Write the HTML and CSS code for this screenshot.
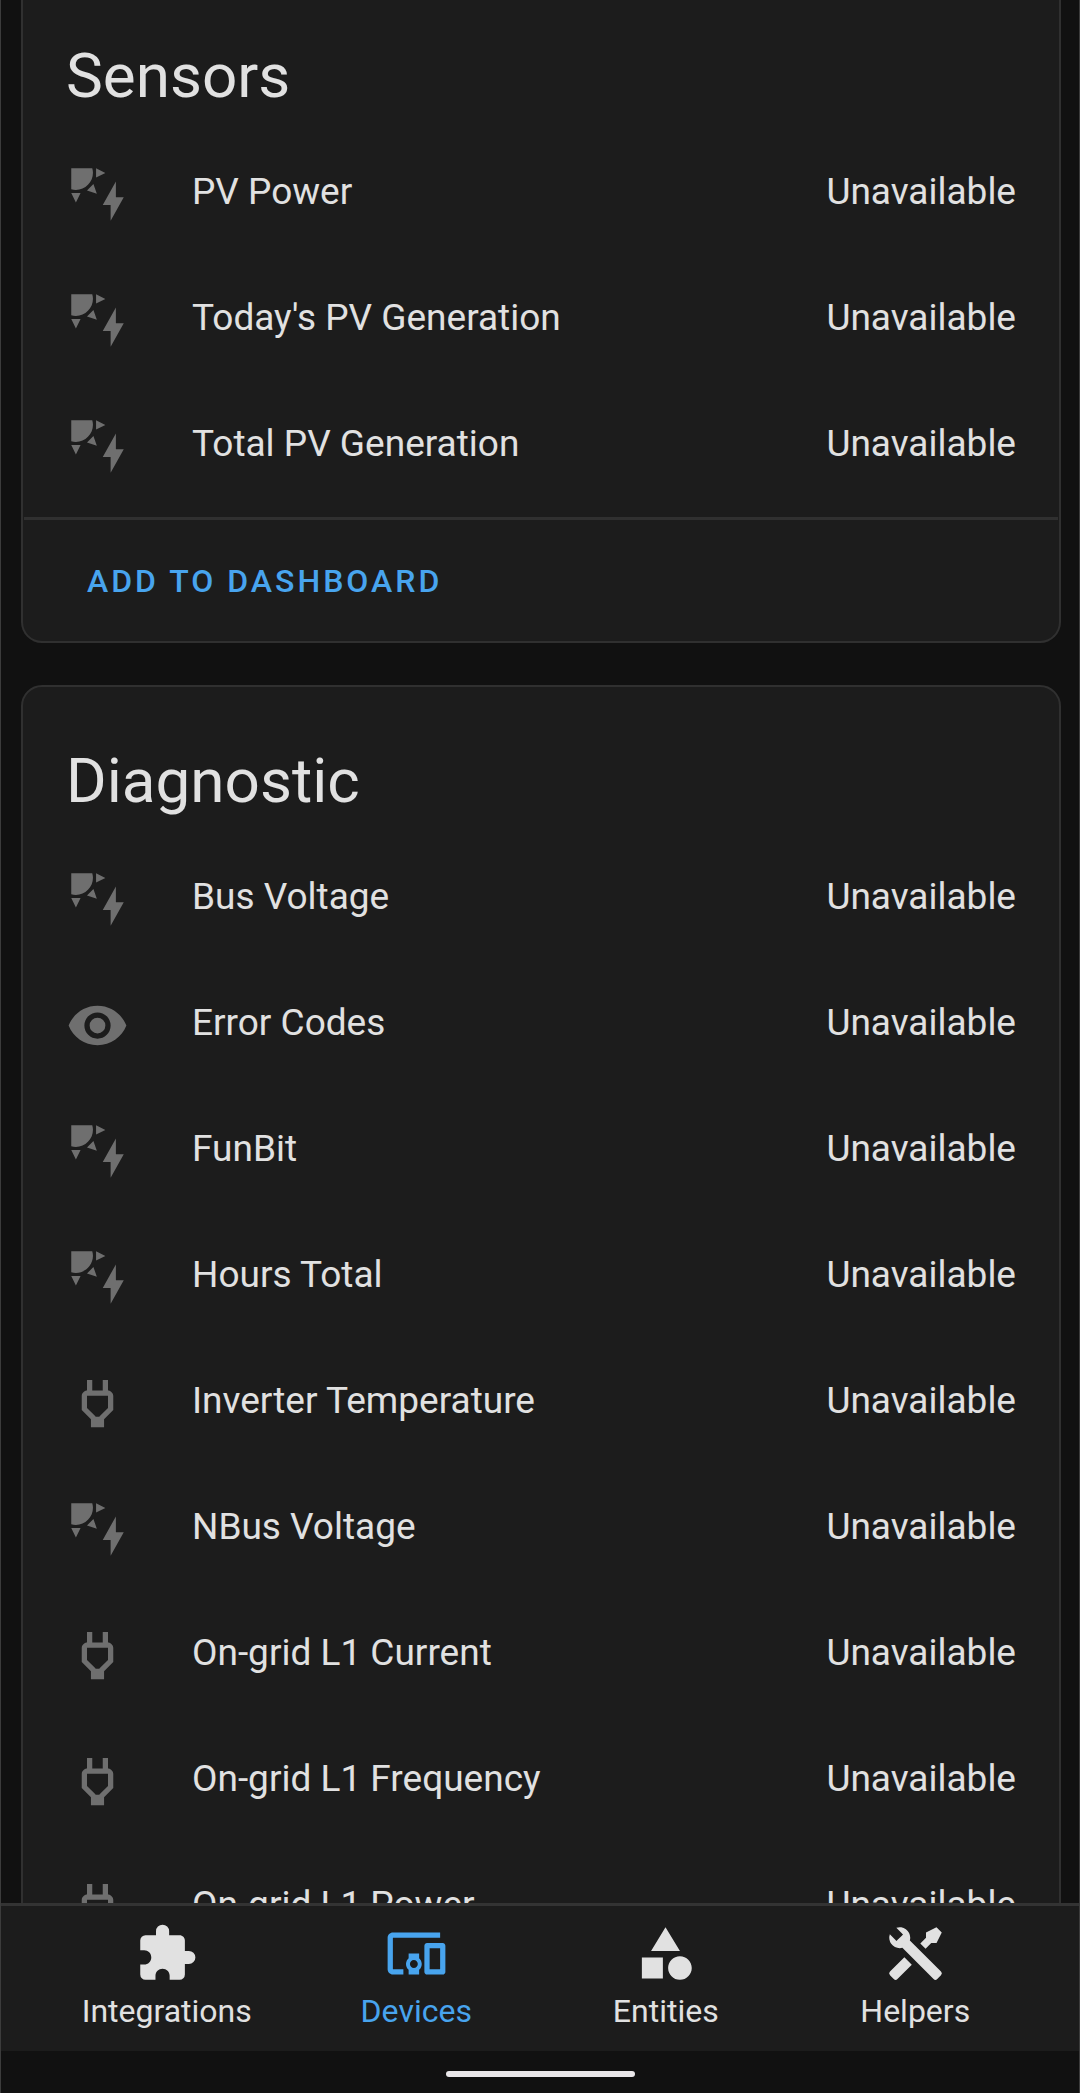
FILE: index.html
```html
<!DOCTYPE html>
<html lang="en">
<head>
    <meta charset="UTF-8">
    <meta name="viewport" content="width=device-width, initial-scale=1.0">
    <title>Devices</title>
    <link rel="stylesheet" href="styles.css">
</head>
<body>
    <!-- Icon sprite -->
    <svg class="sprite" aria-hidden="true">
        <symbol id="solar" viewBox="0 0 24 24">
            <path d="M11.45,2V5.55L15,3.77L11.45,2M10.45,8L8,10.46L11.75,11.71L10.45,8M2,11.45L3.77,15L5.55,11.45H2M10,2H2V10C2.57,10.17 3.17,10.25 3.77,10.25C7.35,10.26 10.26,7.35 10.27,3.75C10.26,3.16 10.17,2.57 10,2M17,22V16H14L19,7V13H22L17,22Z"/>
        </symbol>
        <symbol id="eye" viewBox="0 0 24 24">
            <path d="M12,9A3,3 0 0,0 9,12A3,3 0 0,0 12,15A3,3 0 0,0 15,12A3,3 0 0,0 12,9M12,17A5,5 0 0,1 7,12A5,5 0 0,1 12,7A5,5 0 0,1 17,12A5,5 0 0,1 12,17M12,4.5C7,4.5 2.73,7.61 1,12C2.73,16.39 7,19.5 12,19.5C17,19.5 21.27,16.39 23,12C21.27,7.61 17,4.5 12,4.5Z"/>
        </symbol>
        <symbol id="plug" viewBox="0 0 24 24">
            <path d="M16 7V3H14V7H10V3H8V7C7 7 6 8 6 9V14.5L9.5 18V21H14.5V18L18 14.5V9C18 8 17 7 16 7M16 13.67L13.09 16.59L12.67 17H11.33L10.92 16.59L8 13.67V9.09C8 9.06 8.06 9 8.09 9H15.91C15.94 9 16 9.06 16 9.09V13.67Z"/>
        </symbol>
        <symbol id="puzzle" viewBox="0 0 24 24">
            <path d="M20.5,11H19V7C19,5.89 18.1,5 17,5H13V3.5A2.5,2.5 0 0,0 10.5,1A2.5,2.5 0 0,0 8,3.5V5H4A2,2 0 0,0 2,7V10.8H3.5C5,10.8 6.2,12 6.2,13.5C6.2,15 5,16.2 3.5,16.2H2V20A2,2 0 0,0 4,22H7.8V20.5C7.8,19 9,17.8 10.5,17.8C12,17.8 13.2,19 13.2,20.5V22H17A2,2 0 0,0 19,20V16H20.5A2.5,2.5 0 0,0 23,13.5A2.5,2.5 0 0,0 20.5,11Z"/>
        </symbol>
        <symbol id="devices" viewBox="0 0 24 24">
            <path d="M3 6H21V4H3C1.9 4 1 4.9 1 6V18C1 19.1 1.9 20 3 20H7V18H3V6M13 12H9V13.78C8.39 14.33 8 15.11 8 16C8 16.89 8.39 17.67 9 18.22V20H13V18.22C13.61 17.67 14 16.88 14 16S13.61 14.33 13 13.78V12M11 17.5C10.17 17.5 9.5 16.83 9.5 16S10.17 14.5 11 14.5 12.5 15.17 12.5 16 11.83 17.5 11 17.5M22 8H16C15.5 8 15 8.5 15 9V19C15 19.5 15.5 20 16 20H22C22.5 20 23 19.5 23 19V9C23 8.5 22.5 8 22 8M21 18H17V10H21V18Z"/>
        </symbol>
        <symbol id="shapes" viewBox="0 0 24 24">
            <path d="M11,13.5V21.5H3V13.5H11M12,2L17.5,11H6.5L12,2M17.5,13C20,13 22,15 22,17.5C22,20 20,22 17.5,22C15,22 13,20 13,17.5C13,15 15,13 17.5,13Z"/>
        </symbol>
        <symbol id="tools" viewBox="0 0 24 24">
            <path d="M21.71 20.29L20.29 21.71A1 1 0 0 1 18.88 21.71L7 9.85A3.81 3.81 0 0 1 6 10A4 4 0 0 1 2.22 4.7L4.76 7.24L5.29 6.71L6.71 5.29L7.24 4.76L4.7 2.22A4 4 0 0 1 10 6A3.81 3.81 0 0 1 9.85 7L21.71 18.88A1 1 0 0 1 21.71 20.29M2.29 18.88A1 1 0 0 0 2.29 20.29L3.71 21.71A1 1 0 0 0 5.12 21.71L10.59 16.25L7.76 13.42M20 2L16 4V6L13.83 8.17L15.83 10.17L18 8H20L22 4Z"/>
        </symbol>
    </svg>

    <main class="content">
        <section class="card card-continued">
            <h2 class="card-title">Sensors</h2>
            <ul class="entities">
                <li class="entity"><svg class="icon"><use href="#solar"/></svg><span class="name">PV Power</span><span class="state">Unavailable</span></li>
                <li class="entity"><svg class="icon"><use href="#solar"/></svg><span class="name">Today's PV Generation</span><span class="state">Unavailable</span></li>
                <li class="entity"><svg class="icon"><use href="#solar"/></svg><span class="name">Total PV Generation</span><span class="state">Unavailable</span></li>
            </ul>
            <div class="card-actions">
                <button class="add-button" type="button">Add to dashboard</button>
            </div>
        </section>

        <section class="card">
            <h2 class="card-title">Diagnostic</h2>
            <ul class="entities">
                <li class="entity"><svg class="icon"><use href="#solar"/></svg><span class="name">Bus Voltage</span><span class="state">Unavailable</span></li>
                <li class="entity"><svg class="icon"><use href="#eye"/></svg><span class="name">Error Codes</span><span class="state">Unavailable</span></li>
                <li class="entity"><svg class="icon"><use href="#solar"/></svg><span class="name">FunBit</span><span class="state">Unavailable</span></li>
                <li class="entity"><svg class="icon"><use href="#solar"/></svg><span class="name">Hours Total</span><span class="state">Unavailable</span></li>
                <li class="entity"><svg class="icon"><use href="#plug"/></svg><span class="name">Inverter Temperature</span><span class="state">Unavailable</span></li>
                <li class="entity"><svg class="icon"><use href="#solar"/></svg><span class="name">NBus Voltage</span><span class="state">Unavailable</span></li>
                <li class="entity"><svg class="icon"><use href="#plug"/></svg><span class="name">On-grid L1 Current</span><span class="state">Unavailable</span></li>
                <li class="entity"><svg class="icon"><use href="#plug"/></svg><span class="name">On-grid L1 Frequency</span><span class="state">Unavailable</span></li>
                <li class="entity"><svg class="icon"><use href="#plug"/></svg><span class="name">On-grid L1 Power</span><span class="state">Unavailable</span></li>
            </ul>
        </section>
    </main>

    <nav class="tabs">
        <a class="tab" href="#integrations"><svg class="icon"><use href="#puzzle"/></svg>Integrations</a>
        <a class="tab active" href="#devices-page" aria-current="page"><svg class="icon"><use href="#devices"/></svg>Devices</a>
        <a class="tab" href="#entities"><svg class="icon"><use href="#shapes"/></svg>Entities</a>
        <a class="tab" href="#helpers"><svg class="icon"><use href="#tools"/></svg>Helpers</a>
    </nav>

    <!-- Phone gesture bar -->
    <div class="gesture-area">
        <div class="gesture-pill"></div>
    </div>
</body>
</html>
```
FILE: styles.css
```css
* {
    box-sizing: border-box;
}

body {
    display: flex;
    flex-direction: column;
    height: 100vh;
    margin: 0;
    border-left: 1px solid #3c3c3c;
    border-right: 1px solid #3c3c3c;
    background-color: #111111;
    color: #e1e1e1;
    font-family: Roboto, sans-serif;
    font-size: 37px;
}

.sprite {
    display: none;
}

.icon {
    flex: none;
    width: 63px;
    height: 63px;
    fill: currentColor;
}

.content {
    display: flex;
    flex-direction: column;
    gap: 42px;
    flex: 1;
    min-height: 0;
    padding: 0 18px 0 20px;
    overflow: hidden;
}

.card {
    flex: none;
    padding-top: 31px;
    border: 2px solid #303030;
    border-radius: 21px;
    background-color: #1c1c1c;
}

/* The top of this card is scrolled out of view */
.card-continued {
    padding-top: 13px;
    border-top: none;
    border-top-left-radius: 0;
    border-top-right-radius: 0;
}

.card-title {
    margin: 0;
    padding: 0 43px;
    font-size: 62px;
    font-weight: 400;
    line-height: 126px;
}

.entities {
    display: flex;
    flex-direction: column;
    gap: 21px;
    margin: 0;
    padding: 0 43px 21px;
    list-style: none;
}

.entity {
    display: flex;
    align-items: center;
    height: 105px;
}

.entity .icon {
    margin: 5px 63px 0 0;
    color: #6f6f6f;
}

.name {
    flex: 1;
}

.card-actions {
    margin: 0 1px;
    padding: 13px 42px;
    border-top: 3px solid #303030;
}

.add-button {
    height: 95px;
    padding: 0 21px;
    border: none;
    background: none;
    color: #48a4ee;
    font-family: inherit;
    font-size: 32px;
    font-weight: 500;
    letter-spacing: 3px;
    text-transform: uppercase;
    cursor: pointer;
}

/* Bottom navigation */
.tabs {
    display: flex;
    height: 148px;
    padding: 0 39px 0 41px;
    border-top: 3px solid #333333;
    background-color: #1c1c1c;
}

.tab {
    display: flex;
    flex: 1;
    flex-direction: column;
    align-items: center;
    padding-top: 16px;
    color: #e1e1e1;
    font-size: 32px;
    line-height: 52px;
    text-decoration: none;
}

.tab.active {
    color: #48a4ee;
}

.gesture-area {
    display: flex;
    align-items: center;
    justify-content: center;
    height: 42px;
    padding-top: 4px;
}

.gesture-pill {
    width: 189px;
    height: 6px;
    border-radius: 3px;
    background-color: #e9e7e9;
}
```
